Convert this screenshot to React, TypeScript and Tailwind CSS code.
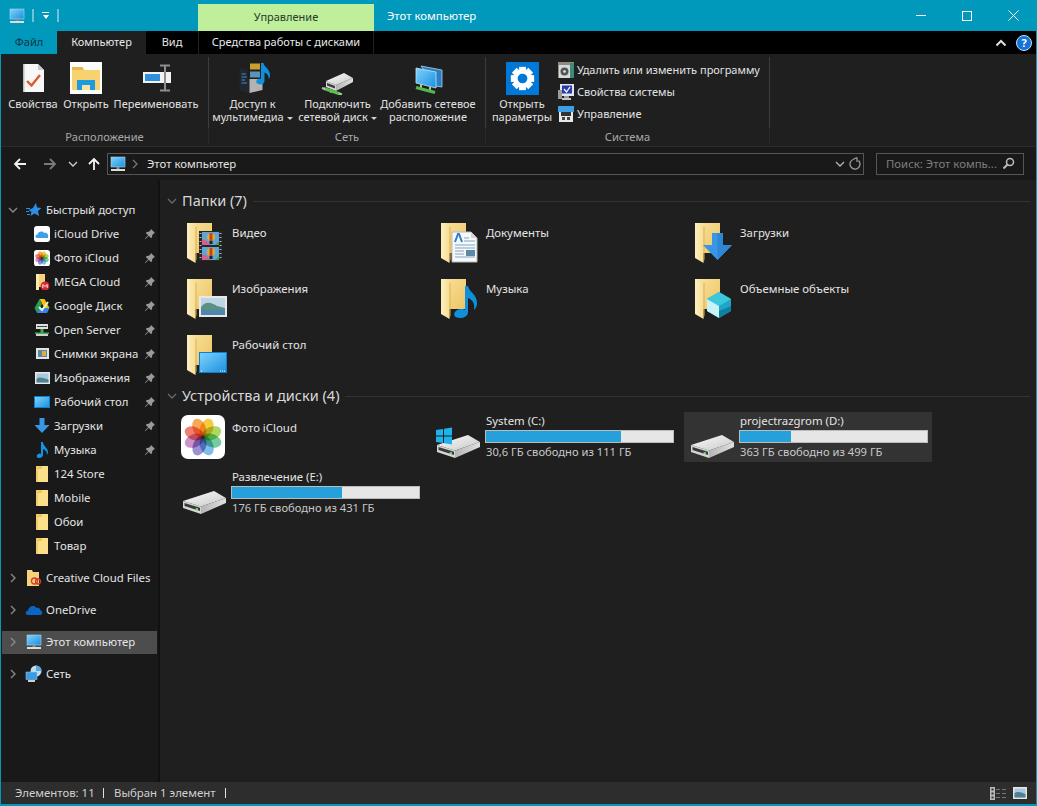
import React from "react";

const Grad = () => (
  <svg width="0" height="0" className="absolute">
    <defs>
      <linearGradient id="fb" x1="0" y1="0" x2="1" y2="1">
        <stop offset="0" stopColor="#f9e09a" />
        <stop offset="1" stopColor="#ecc565" />
      </linearGradient>
      <linearGradient id="ff" x1="0" y1="0" x2="1" y2="0">
        <stop offset="0" stopColor="#fdf0c0" />
        <stop offset="1" stopColor="#f8dd93" />
      </linearGradient>
      <linearGradient id="dt" x1="0" y1="0" x2="1" y2="1">
        <stop offset="0" stopColor="#fcfcfc" />
        <stop offset="1" stopColor="#c8c8c8" />
      </linearGradient>
      <linearGradient id="dr" x1="0" y1="0" x2="1" y2="0">
        <stop offset="0" stopColor="#b5b5b5" />
        <stop offset="1" stopColor="#e0e0e0" />
      </linearGradient>
      <linearGradient id="sc" x1="0" y1="0" x2="1" y2="1">
        <stop offset="0" stopColor="#7fd4fb" />
        <stop offset="1" stopColor="#1a8fe0" />
      </linearGradient>
    </defs>
  </svg>
);

const FolderBase = ({ children }: { children?: React.ReactNode }) => (
  <svg width="48" height="48" viewBox="0 0 48 48">
    <path d="M6 6H28V36H6Z" fill="url(#fb)" />
    <path d="M3 6H10C11 6 11.500 7 11.500 8V46L3 41Z" fill="url(#ff)" />
    <path d="M11.500 10L12.500 9.500V42L11.500 46Z" fill="#d9b357" />
    {children}
  </svg>
);

const FVideo = () => (
  <FolderBase>
    <rect x="15" y="14" width="23" height="30" fill="#262626" />
    <rect x="18" y="15" width="17" height="13" fill="#5ea5d8" />
    <rect x="18" y="30" width="17" height="13" fill="#5ea5d8" />
    <path d="M18 23C21 21 23 25 27 28H18Z" fill="#d65f8c" />
    <path d="M18 38C21 36 23 40 27 43H18Z" fill="#d65f8c" />
    <path d="M35 24L31 28H35Z" fill="#4b9b53" />
    <path d="M35 39L31 43H35Z" fill="#4b9b53" />
    <circle cx="27" cy="20" r="4" fill="#e0b020" />
    <rect x="25.500" y="16" width="3" height="8" fill="#c8402c" />
    <rect x="25.500" y="24" width="3" height="3" fill="#222" />
    <circle cx="27" cy="35" r="4" fill="#e0b020" />
    <rect x="25.500" y="31" width="3" height="8" fill="#c8402c" />
    <rect x="25.500" y="39" width="3" height="3" fill="#222" />
    <path d="M16.500 16v1M16.500 20v1M16.500 24v1M16.500 28v1M16.500 32v1M16.500 36v1M16.500 40v1M36.500 16v1M36.500 20v1M36.500 24v1M36.500 28v1M36.500 32v1M36.500 36v1M36.500 40v1" stroke="#b5b5b5" strokeWidth="2" />
  </FolderBase>
);
const FDocs = () => (
  <FolderBase>
    <path d="M14 15H33L39 21V45H14Z" fill="#f8f8f8" stroke="#b8b8b8" />
    <path d="M33 15V21H39Z" fill="#d5d5d5" />
    <path d="M17 25L20 17H21L24 25" fill="none" stroke="#2f7fd0" strokeWidth="2" />
    <path d="M26 21H31M26 24H37M17 28H37M17 31H37M17 34H26M17 37H26M17 40H37" stroke="#7aa7c9" />
    <rect x="28" y="33" width="9" height="6" fill="#5a8aa5" />
  </FolderBase>
);
const FDown = () => (
  <FolderBase>
    <path d="M20 16H31V28H40L25.500 43L11 28H20Z" fill="#3a96e4" />
    <path d="M25.500 16H31V28H40L25.500 43Z" fill="#2f86d6" />
  </FolderBase>
);
const FPics = () => (
  <FolderBase>
    <rect x="15" y="23" width="28" height="21" fill="#e8e8e8" />
    <rect x="17" y="25" width="24" height="17" fill="#bcd6e6" />
    <path d="M17 34C22 27 28 30 33 33L41 35V42H17Z" fill="#5d8f86" />
    <rect x="17" y="37" width="24" height="5" fill="#4f86ad" />
  </FolderBase>
);
const FMusic = () => (
  <FolderBase>
    <path d="M27 13H30C31 19 39 21 39 30C39 33 38 35 36 37C37 31 35 27 30 25V39C30 43 26 45 22 45C17 45 15 42 17 39C19 36 24 35 27 37Z" fill="#0f8fdc" />
  </FolderBase>
);
const F3d = () => (
  <FolderBase>
    <path d="M15 26L27 19L39 26V38L27 45L15 38Z" fill="#1ea6c6" />
    <path d="M15 26L27 19L39 26L27 33Z" fill="#3cc7dd" />
    <path d="M15 26L27 33V45L15 38Z" fill="#c9f2f5" />
    <path d="M27 38V45L39 38V33Z" fill="#0f7fa3" />
  </FolderBase>
);
const FDesk = () => (
  <FolderBase>
    <rect x="15.500" y="23.500" width="27" height="20" fill="url(#sc)" stroke="#0d7ed0" />
    <path d="M36 42h1M38 42h1M40 42h1M17 42h1" stroke="#fff" />
  </FolderBase>
);

const Photos = ({ s = 44 }: { s?: number }) => {
  const cols = ["#f6c21d", "#a5cf45", "#5ec391", "#6ab1e3", "#8a7fc9", "#c37fc2", "#ee6a5a", "#f59b3b"];
  return (
    <svg width={s} height={s} viewBox="0 0 44 44" className="isolate">
      <rect width="44" height="44" rx="7" fill="#fff" />
      {cols.map((c, i) => (
        <ellipse key={i} cx="22" cy="12.500" rx="6.500" ry="10" fill={c} opacity="0.85" className="mix-blend-multiply" transform={`rotate(${22 + i * 45} 22 22)`} />
      ))}
    </svg>
  );
};

const Drive = ({ win }: { win?: boolean }) => (
  <svg width="48" height="48" viewBox="0 0 48 48">
    <path d="M3 33L34 23L46 30L21 38.500Z" fill="url(#dt)" />
    <path d="M21 38.500L46 30V35L21 46Z" fill="url(#dr)" />
    <path d="M3 33L21 38.500V46L3 40Z" fill="#d6d6d6" />
    <path d="M4.500 35L20 39.800V43L4.500 38Z" fill="#3a3a3a" />
    <rect x="15.500" y="40.200" width="2.500" height="2" fill="#6de06d" />
    {win && (
      <g fill="#1fb3ec">
        <path d="M2 18L9 17V23.500H2Z" />
        <path d="M10 16.800L18 15.500V23.500H10Z" />
        <path d="M2 24.500H9V31L2 30Z" />
        <path d="M10 24.500H18V32.500L10 31.200Z" />
      </g>
    )}
  </svg>
);

const Monitor = ({ s = 16 }: { s?: number }) => (
  <svg width={s} height={s} viewBox="0 0 16 16">
    <rect x="1" y="1" width="14" height="10" fill="url(#sc)" stroke="#a7d5ee" strokeWidth="0.600" />
    <rect x="6.500" y="11" width="3" height="2" fill="#8b8b8b" />
    <rect x="1" y="13" width="14" height="2" fill="#dcdcdc" />
  </svg>
);

const SmallFolder = () => (
  <svg width="16" height="16" viewBox="0 0 16 16">
    <path d="M2 0H14V16H2Z" fill="#fbe08c" />
    <path d="M2 0H8V3H2Z" fill="#f0c657" />
    <path d="M2 0H4V16H2Z" fill="#f3cc68" />
  </svg>
);

const Pin = () => (
  <svg width="12" height="12" viewBox="0 0 12 12">
    <path d="M7 1L11 5L9.800 5.500L8.200 7.200L8 9.500L6.800 10L4.800 7.800L1.500 11L1 10.500L4.200 7.200L2 5.200L2.500 4L4.800 3.800L6.500 2.200Z" fill="#9a9a9a" />
  </svg>
);

const Chev = ({ dir = "r", c = "#8c8c8c" }: { dir?: "r" | "d"; c?: string }) => (
  <svg width="10" height="10" viewBox="0 0 10 10">
    <path d={dir === "r" ? "M3 1L7 5L3 9" : "M1 3L5 7L9 3"} fill="none" stroke={c} strokeWidth="1.300" />
  </svg>
);

const IcoCloud = () => (
  <svg width="16" height="16" viewBox="0 0 16 16">
    <rect width="16" height="16" rx="3" fill="#fff" />
    <path d="M3 12C1 12 1 8.500 3.500 8.500C4 5.500 8.500 4.500 10 7C13 6 15 9 14 12Z" fill="#3d9fe8" />
  </svg>
);
const IcoMega = () => (
  <svg width="16" height="16" viewBox="0 0 16 16">
    <path d="M2 0H11V13H2Z" fill="#f4d27c" />
    <path d="M2 0H5V16H2Z" fill="#fbe9ae" />
    <circle cx="11" cy="12" r="4.500" fill="#d9272e" />
    <path d="M8.800 14V10.500L11 12.500L13.200 10.500V14" fill="none" stroke="#fff" strokeWidth="0.900" />
  </svg>
);
const IcoGoogle = () => (
  <svg width="16" height="16" viewBox="0 0 16 16">
    <path d="M5.500 1H10.500L15.500 10H10.500Z" fill="#f4c20d" />
    <path d="M5.500 1L0.500 10L3 15L8 6Z" fill="#2a9e50" />
    <path d="M3 15H13L15.500 10H5.500Z" fill="#3b82ea" />
    <path d="M5 9L8 12L14 4" fill="none" stroke="#e8f5d0" strokeWidth="2" />
  </svg>
);
const IcoServer = () => (
  <svg width="16" height="16" viewBox="0 0 16 16">
    <rect x="2" y="2" width="12" height="5" fill="#dedede" />
    <rect x="3" y="4" width="10" height="1" fill="#444" />
    <rect x="6.500" y="7" width="3" height="4" fill="#3fae4a" />
    <rect x="1" y="10.500" width="14" height="1.500" fill="#46b050" />
    <rect x="2" y="12" width="12" height="2" fill="#cfcfcf" />
  </svg>
);
const IcoShots = () => (
  <svg width="16" height="16" viewBox="0 0 16 16">
    <rect x="2" y="2" width="13" height="11" fill="#e4e4e4" />
    <rect x="4" y="4" width="9" height="7" fill="#5d87a8" />
    <rect x="8" y="5" width="4" height="5" fill="#d9b23c" />
  </svg>
);
const IcoImg = () => (
  <svg width="16" height="16" viewBox="0 0 16 16">
    <rect x="1" y="2" width="15" height="12" fill="#e8e8e8" />
    <rect x="2.500" y="3.500" width="12" height="9" fill="#a9c8dc" />
    <path d="M2.500 9C6 6 9 8 14.500 9.500V12.500H2.500Z" fill="#4f8094" />
  </svg>
);
const IcoDesk = () => (
  <svg width="16" height="16" viewBox="0 0 16 16">
    <rect x="0.500" y="2.500" width="15" height="11" fill="url(#sc)" stroke="#0d7ed0" />
  </svg>
);
const IcoDown = () => (
  <svg width="16" height="16" viewBox="0 0 16 16">
    <path d="M5.500 0H10.500V7H15.500L8 15L0.500 7H5.500Z" fill="#3a96e4" />
  </svg>
);
const IcoMusic = () => (
  <svg width="16" height="16" viewBox="0 0 16 16">
    <path d="M7 0H9C9 4 14 6 14 10C14 11.500 13.500 12 13 13C13 9 11 8 9 7V13C9 15 7 16 5 16C3 16 2 14.500 3 13C4 11.500 6 11 7 12Z" fill="#1295e0" />
  </svg>
);
const IcoStar = () => (
  <svg width="16" height="16" viewBox="0 0 16 16">
    <path d="M10 1L11 5.500L15.500 6L12 9L13 14L8.500 11.500L4.500 14L5.500 10L2.500 8L7 6Z" fill="#2c8ee6" />
    <path d="M0 6.500H4M0 9.500H3M1 12.500H4" stroke="#2c8ee6" />
  </svg>
);
const IcoCC = () => (
  <svg width="16" height="16" viewBox="0 0 16 16">
    <path d="M1 0H6L7 2H13V16H1Z" fill="#f6d27a" />
    <circle cx="8.500" cy="11" r="3" fill="none" stroke="#d83a2a" strokeWidth="1.300" />
    <circle cx="12" cy="11.500" r="2.500" fill="none" stroke="#d83a2a" strokeWidth="1.300" />
  </svg>
);
const IcoOne = () => (
  <svg width="18" height="16" viewBox="0 0 18 16">
    <path d="M3 13C0 13 0 9 3 8.500C4 4 9 2.500 11.500 6C14 5 15.500 7 15.500 8.500C18 8.500 18 13 15.500 13Z" fill="#0a66c2" />
  </svg>
);
const IcoNet = () => (
  <svg width="18" height="18" viewBox="0 0 18 18">
    <circle cx="11" cy="6" r="5.500" fill="#bcdcf0" />
    <path d="M11 .5A5.500 5.500 0 0 1 16.500 6H11Z" fill="#5ba7dc" />
    <rect x="1" y="7" width="11" height="7.500" fill="#3c9be0" stroke="#9ed2f2" strokeWidth="0.500" />
    <rect x="3" y="15" width="7" height="2" fill="#cfcfcf" />
  </svg>
);

/* ribbon icons */
const RProps = () => (
  <svg width="32" height="32" viewBox="0 0 32 32">
    <path d="M6 2H21L27 8V30H6Z" fill="#f8f8f8" />
    <path d="M21 2V8H27Z" fill="#c8c8c8" />
    <path d="M6 2H7.500V30H6Z" fill="#bdbdbd" />
    <path d="M10 19L14.500 23.500L23 13" fill="none" stroke="#e2572b" strokeWidth="2.400" />
  </svg>
);
const ROpen = () => (
  <svg width="32" height="32" viewBox="0 0 32 32">
    <rect width="32" height="32" fill="#fff" />
    <path d="M2 6H13L15 8H30V28H2Z" fill="#f7d26f" />
    <rect x="2" y="5" width="11" height="3" fill="#e8b94a" />
    <path d="M7 28V18H25V28H20V23H12V28Z" fill="#1d9ae0" />
    <rect x="12" y="23" width="8" height="5" fill="#fbe39a" />
  </svg>
);
const RRename = () => (
  <svg width="32" height="32" viewBox="0 0 32 32">
    <rect x="3" y="10" width="28" height="11" fill="#f2f2f2" />
    <rect x="5" y="12" width="15" height="7" fill="#2f8fdd" />
    <rect x="24" y="3" width="2" height="26" fill="#8e8e8e" />
    <path d="M20 3.500H30M20 28.500H30" stroke="#8e8e8e" strokeWidth="2" />
  </svg>
);
const RMedia = () => (
  <svg width="36" height="32" viewBox="0 0 36 32">
    <path d="M4.500 6L14.500 8V31L4.500 28Z" fill="#23262c" />
    <path d="M14.500 8L27.500 6V28L14.500 31Z" fill="#b3b3b3" />
    <path d="M6.500 12H11M6.500 15H12M6.500 18H10M6.500 21H12" stroke="#3d8fd4" />
    <rect x="12.500" y="0" width="15" height="17" fill="#1c1e22" />
    <rect x="15" y="1.500" width="10" height="6" fill="#c9a02c" />
    <rect x="15" y="9.500" width="10" height="6" fill="#5c93b8" />
    <path d="M26 1H28.500C29 5 35 7 35 13C35 15 34.500 16 33.500 17C34 13 32 11.500 29.500 10.500V19C29.500 22 26 23 23 22C20.500 21 21 18 23 17C24 16.500 25 16.500 26 17Z" fill="#0f8fdc" />
  </svg>
);
const RMap = () => (
  <svg width="34" height="34" viewBox="0 0 34 34">
    <path d="M5 20L23 12L32 17L15 24Z" fill="url(#dt)" />
    <path d="M15 24L32 17V21L15 30Z" fill="url(#dr)" />
    <path d="M5 20L15 24V30L5 26Z" fill="#d6d6d6" />
    <path d="M6 22L14 25V27.500L6 24.500Z" fill="#3a3a3a" />
    <path d="M10 30V32" stroke="#999" strokeWidth="2" />
    <path d="M3 27.500L19 33" stroke="#5cc04c" strokeWidth="3" />
    <path d="M1 27L4 28M18 32.500L21 33.500" stroke="#bdbdbd" strokeWidth="2" />
  </svg>
);
const RNet = () => (
  <svg width="32" height="32" viewBox="0 0 32 32">
    <path d="M9 4L30 8V25L23 24Z" fill="#2b7fc4" stroke="#a6d5ef" strokeWidth="0.800" />
    <path d="M4 6L24 10V26L4 21Z" fill="url(#sc)" stroke="#c5e3f5" strokeWidth="0.800" />
    <path d="M9 22V26M18 25V28" stroke="#bbb" strokeWidth="2" />
    <path d="M4 25.500L23 30.500" stroke="#53b948" strokeWidth="3" />
  </svg>
);
const RGear = () => (
  <svg width="33" height="33" viewBox="0 0 34 34">
    <rect width="34" height="34" fill="#0078d7" />
    {[0, 45, 90, 135].map((r) => (
      <rect key={r} x="13.500" y="5" width="7" height="24" fill="#fff" transform={`rotate(${r} 17 17)`} />
    ))}
    <circle cx="17" cy="17" r="9.500" fill="#fff" />
    <circle cx="17" cy="17" r="5" fill="#0078d7" />
  </svg>
);
const SUninstall = () => (
  <svg width="16" height="16" viewBox="0 0 16 16">
    <rect x="0" y="0" width="16" height="16" fill="#8d8d7c" />
    <rect x="1" y="3" width="11" height="13" fill="#d9d9d9" />
    <circle cx="6.500" cy="9.500" r="4" fill="#555" />
    <circle cx="6.500" cy="9.500" r="1.300" fill="#eee" />
    <rect x="12" y="1" width="4" height="15" fill="#3b8b7a" />
  </svg>
);
const SSystem = () => (
  <svg width="16" height="16" viewBox="0 0 16 16">
    <rect x="2" y="0" width="14" height="12" fill="#dfe8f2" />
    <rect x="4" y="1.500" width="10" height="8" fill="#2c3ba8" />
    <path d="M6 5L8.500 8L12 3" fill="none" stroke="#fff" strokeWidth="1.300" />
    <rect x="6" y="12" width="5" height="2" fill="#999" />
    <rect x="0" y="6" width="4" height="9" fill="#9b9b9b" />
    <rect x="4" y="14" width="9" height="2" fill="#c6c6c6" />
  </svg>
);
const SManage = () => (
  <svg width="16" height="16" viewBox="0 0 16 16">
    <rect x="0" y="0" width="16" height="6" fill="#3d9fe8" />
    <rect x="1" y="6" width="14" height="10" fill="#e8e8e8" />
    <rect x="3" y="6" width="10" height="4" fill="#333" />
    <rect x="4" y="11" width="3" height="3" fill="#444" />
    <rect x="9" y="11" width="3" height="3" fill="#444" />
  </svg>
);

const Arrow = ({ c, flip }: { c: string; flip?: boolean }) => (
  <svg width="14" height="14" viewBox="0 0 14 14" className={flip ? "rotate-180" : ""}>
    <path d="M13 7H2M7 2L2 7L7 12" fill="none" stroke={c} strokeWidth="1.800" />
  </svg>
);

const RBtn = ({ w, icon, lines }: { w: string; icon: React.ReactNode; lines: React.ReactNode[] }) => (
  <div className={`${w} flex shrink-0 flex-col items-center`}>
    <div className="flex h-[36px] items-center justify-center">{icon}</div>
    <div className="mt-[1px] text-center text-[11px] leading-[13px] whitespace-nowrap text-[#e2e2e2]">
      {lines.map((l, i) => (
        <div key={i}>{l}</div>
      ))}
    </div>
  </div>
);

const Caret = () => <span className="ml-[3px] inline-block h-0 w-0 border-x-[3px] border-t-[3px] border-x-transparent border-t-[#d0d0d0] align-middle" />;

const RGroup = ({ w, label, children, extra }: { w: string; label: string; children: React.ReactNode; extra?: string }) => (
  <div className={`${w} flex shrink-0 flex-col`}>
    <div className={`mt-[3px] flex h-[71px] border-r border-[#3c3c3c] pt-[3px] ${extra ?? ""}`}>{children}</div>
    <div className="flex h-[16px] items-center justify-center border-r border-[#2a2a2a] pt-[3px] text-[11.100px] text-[#a8a8a8]">{label}</div>
  </div>
);

const quick: [React.ReactNode, string, boolean][] = [
  [<IcoCloud />, "iCloud Drive", true],
  [<Photos s={16} />, "Фото iCloud", true],
  [<IcoMega />, "MEGA Cloud", true],
  [<IcoGoogle />, "Google Диск", true],
  [<IcoServer />, "Open Server", true],
  [<IcoShots />, "Снимки экрана", true],
  [<IcoImg />, "Изображения", true],
  [<IcoDesk />, "Рабочий стол", true],
  [<IcoDown />, "Загрузки", true],
  [<IcoMusic />, "Музыка", true],
  [<SmallFolder />, "124 Store", false],
  [<SmallFolder />, "Mobile", false],
  [<SmallFolder />, "Обои", false],
  [<SmallFolder />, "Товар", false],
];

const TopRow = ({ icon, label, open, sel, mt }: { icon: React.ReactNode; label: string; open?: boolean; sel?: boolean; mt?: boolean }) => (
  <div className={`flex h-[24px] items-center px-[1px] ${mt ? "mt-[8px]" : ""}`}>
    <div className={`flex h-[23px] w-full items-center ${sel ? "bg-[#4d4d4d]" : ""}`}>
      <div className="flex w-[21px] shrink-0 justify-center">
        <Chev dir={open ? "d" : "r"} />
      </div>
      <div className="flex w-[22px] shrink-0 justify-center">{icon}</div>
      <span className="ml-[1px] text-[11.4px] whitespace-nowrap text-[#e4e4e4]">{label}</span>
    </div>
  </div>
);

const folders: [React.ReactNode, string][] = [
  [<FVideo />, "Видео"],
  [<FDocs />, "Документы"],
  [<FDown />, "Загрузки"],
  [<FPics />, "Изображения"],
  [<FMusic />, "Музыка"],
  [<F3d />, "Объемные объекты"],
  [<FDesk />, "Рабочий стол"],
];

const SecHead = ({ title, mb }: { title: string; mb: string }) => (
  <div className={`${mb} flex h-[20px] items-center pr-[6px] pl-[7px]`}>
    <Chev dir="d" c="#6a6a6a" />
    <span className="ml-[5px] text-[14.500px] whitespace-nowrap text-[#d8d8d8]">{title}</span>
    <div className="ml-[6px] h-px flex-1 bg-[#333]" />
  </div>
);

const DriveTile = ({ name, free, pct, win, sel }: { name: string; free: string; pct: number; win?: boolean; sel?: boolean }) => (
  <div className={`flex h-[50px] w-[248px] ${sel ? "bg-[#333333]" : ""}`}>
    <div className="w-[55px] shrink-0 pl-[4px]">
      <Drive win={win} />
    </div>
    <div className="flex w-[189px] flex-col pt-[1px]">
      <div className="h-[16px] pl-[1px] text-[11.4px] leading-[16px] whitespace-nowrap text-[#e4e4e4]">{name}</div>
      <div className="mt-[1px] h-[13px] border border-[#bcbcbc] bg-[#e6e6e6]">
        <div className="h-full bg-[#26a0da]" style={{ width: `${pct}%` }} />
      </div>
      <div className="mt-[1px] h-[16px] pl-[1px] text-[11.200px] leading-[16px] whitespace-nowrap text-[#c8c8c8]">{free}</div>
    </div>
  </div>
);

export default function App() {
  return (
    <div className="flex h-[806px] w-[1037px] flex-col overflow-hidden bg-[#0099bc] px-[1px] pb-[2px] font-['Noto_Sans',sans-serif]">
      <Grad />
      {/* title bar */}
      <div className="flex h-[31px] shrink-0 items-start">
        <div className="flex h-[31px] w-[197px] items-center pl-[8px]">
          <Monitor />
          <div className="ml-[7px] h-[13px] w-[2px] bg-[#6fc3d8]" />
          <div className="ml-[8px] flex flex-col items-center gap-[2px]">
            <div className="h-px w-[7px] bg-white" />
            <div className="h-0 w-0 border-x-[3.500px] border-t-[4px] border-x-transparent border-t-white" />
          </div>
          <div className="ml-[8px] h-[13px] w-[2px] bg-[#6fc3d8]" />
        </div>
        <div className="mt-[4px] flex h-[27px] w-[176px] items-center justify-center bg-[#c0ef9b] text-[11px] text-[#2a3a2a]">Управление</div>
        <div className="flex h-[31px] items-center pl-[13px] text-[11.4px] text-white">Этот компьютер</div>
        <div className="ml-auto flex h-[31px] items-center">
          <div className="flex w-[46px] justify-center">
            <div className="h-px w-[10px] bg-white" />
          </div>
          <div className="flex w-[46px] justify-center">
            <div className="h-[10px] w-[10px] border border-white" />
          </div>
          <div className="flex w-[46px] justify-center">
            <svg width="11" height="11" viewBox="0 0 11 11">
              <path d="M.5 .5L10.500 10.500M10.500 .5L.5 10.500" stroke="#fff" />
            </svg>
          </div>
        </div>
      </div>
      {/* tabs */}
      <div className="flex h-[23px] shrink-0 items-stretch bg-black text-[11px] text-[#e8e8e8]">
        <div className="flex w-[56px] items-center justify-center bg-[#0099bc] text-[#0d3340]">Файл</div>
        <div className="flex w-[89px] items-center justify-center bg-[#1f1f1f]">Компьютер</div>
        <div className="flex w-[52px] items-center justify-center">Вид</div>
        <div className="flex w-[176px] items-center justify-center border-x border-[#222]">Средства работы с дисками</div>
        <div className="ml-auto flex items-center pr-[4px]">
          <svg width="12" height="10" viewBox="0 0 12 10" className="mr-[9px]">
            <path d="M1.500 7.500L6 3L10.500 7.500" fill="none" stroke="#e0e0e0" strokeWidth="2" />
          </svg>
          <div className="flex h-[16px] w-[16px] items-center justify-center rounded-full border border-[#bfe3fa] bg-[#1572d8] text-[11px] leading-none font-bold text-white">?</div>
        </div>
      </div>
      {/* ribbon */}
      <div className="flex h-[92px] shrink-0 bg-[#1f1f1f]">
        <RGroup w="w-[208px]" label="Расположение" extra="pl-[4px]">
          <RBtn w="w-[56px]" icon={<RProps />} lines={["Свойства"]} />
          <RBtn w="w-[50px]" icon={<ROpen />} lines={["Открыть"]} />
          <RBtn w="w-[90px]" icon={<RRename />} lines={["Переименовать"]} />
        </RGroup>
        <RGroup w="w-[277px]" label="Сеть">
          <RBtn w="w-[87px]" icon={<RMedia />} lines={["Доступ к", <>мультимедиа<Caret /></>]} />
          <RBtn w="w-[83px]" icon={<RMap />} lines={["Подключить", <>сетевой диск<Caret /></>]} />
          <RBtn w="w-[98px]" icon={<RNet />} lines={["Добавить сетевое", "расположение"]} />
        </RGroup>
        <RGroup w="w-[284px]" label="Система">
          <RBtn w="w-[72px]" icon={<RGear />} lines={["Открыть", "параметры"]} />
          <div className="flex flex-col gap-[6px] pt-[2px] text-[11px] whitespace-nowrap text-[#e2e2e2]">
            <div className="flex h-[16px] items-center gap-[3px]"><SUninstall />Удалить или изменить программу</div>
            <div className="flex h-[16px] items-center gap-[3px]"><SSystem />Свойства системы</div>
            <div className="flex h-[16px] items-center gap-[3px]"><SManage />Управление</div>
          </div>
        </RGroup>
      </div>
      {/* address */}
      <div className="flex h-[34px] shrink-0 items-center border-t border-[#2b2b2b] bg-[#191919] pl-[4px]">
        <div className="flex w-[30px] justify-center"><Arrow c="#f0f0f0" /></div>
        <div className="flex w-[30px] justify-center"><Arrow c="#7a7a7a" flip /></div>
        <div className="flex w-[16px] justify-center"><Chev dir="d" c="#d0d0d0" /></div>
        <div className="flex w-[26px] justify-center">
          <svg width="14" height="14" viewBox="0 0 14 14">
            <path d="M7 13V2M2 7L7 2L12 7" fill="none" stroke="#f5f5f5" strokeWidth="1.800" />
          </svg>
        </div>
        <div className="flex h-[22px] w-[757px] items-center border border-[#555] pl-[2px]">
          <Monitor />
          <div className="ml-[1px] flex w-[16px] justify-center"><Chev c="#777" /></div>
          <span className="ml-[4px] text-[11.4px] text-[#e2e2e2]">Этот компьютер</span>
          <div className="ml-auto flex items-center pr-[1px]">
            <Chev dir="d" c="#b5b5b5" />
            <svg width="14" height="14" viewBox="0 0 14 14" className="ml-[3px]">
              <path d="M10.500 3.500A5 5 0 1 1 5 2.500M5 2.500L9 .5M9 .5V5" fill="none" stroke="#9a9a9a" strokeWidth="1.300" />
            </svg>
          </div>
        </div>
        <div className="ml-[12px] flex h-[22px] w-[148px] items-center border border-[#555] pl-[9px] text-[11.4px] whitespace-nowrap text-[#7e7e7e]">
          Поиск: Этот компь...
          <svg width="13" height="13" viewBox="0 0 13 13" className="mr-[8px] ml-auto">
            <circle cx="8" cy="5" r="3.500" fill="none" stroke="#bdbdbd" strokeWidth="1.500" />
            <path d="M5.500 7.500L1.500 11.500" stroke="#bdbdbd" strokeWidth="2" />
          </svg>
        </div>
      </div>
      {/* body */}
      <div className="flex min-h-0 flex-1">
        <div className="flex w-[157px] shrink-0 flex-col bg-[#191919] pt-[18px]">
          <TopRow icon={<IcoStar />} label="Быстрый доступ" open />
          {quick.map(([ic, label, pin]) => (
            <div key={label} className="flex h-[24px] items-center">
              <div className="flex w-[49px] shrink-0 justify-end">{ic}</div>
              <span className="ml-[4px] flex-1 text-[11.4px] whitespace-nowrap text-[#e4e4e4]">{label}</span>
              {pin && <div className="mr-[2px] w-[12px]"><Pin /></div>}
            </div>
          ))}
          <TopRow icon={<IcoCC />} label="Creative Cloud Files" mt />
          <TopRow icon={<IcoOne />} label="OneDrive" mt />
          <TopRow icon={<Monitor />} label="Этот компьютер" mt sel />
          <TopRow icon={<IcoNet />} label="Сеть" mt />
        </div>
        <div className="w-[2px] shrink-0 bg-[#111]" />
        <div className="flex-1 bg-[#1f1f1f] pt-[11px]">
          <SecHead title="Папки (7)" mb="mb-[5px]" />
          <div className="mb-[8px] ml-[16px] grid grid-cols-[repeat(3,254px)] gap-y-[6px]">
            {folders.map(([ic, label]) => (
              <div key={label} className="flex h-[50px] w-[248px]">
                <div className="w-[56px] shrink-0 pt-[1px] pl-[8px]">{ic}</div>
                <div className="pt-[9px] text-[11.4px] leading-[16px] whitespace-nowrap text-[#e4e4e4]">{label}</div>
              </div>
            ))}
          </div>
          <SecHead title="Устройства и диски (4)" mb="mb-[6px]" />
          <div className="ml-[16px] grid grid-cols-[repeat(3,254px)] gap-y-[6px]">
            <div className="flex h-[50px] w-[248px]">
              <div className="w-[56px] shrink-0 pt-[3px] pl-[5px]"><Photos /></div>
              <div className="pt-[8px] text-[11.4px] leading-[16px] whitespace-nowrap text-[#e4e4e4]">Фото iCloud</div>
            </div>
            <DriveTile name="System (C:)" free="30,6 ГБ свободно из 111 ГБ" pct={72} win />
            <DriveTile name="projectrazgrom (D:)" free="363 ГБ свободно из 499 ГБ" pct={27.500} sel />
            <DriveTile name="Развлечение (E:)" free="176 ГБ свободно из 431 ГБ" pct={59} />
          </div>
        </div>
      </div>
      {/* status */}
      <div className="flex h-[22px] shrink-0 items-center bg-[#2d2d2d] pl-[14px] text-[11.4px] text-[#d0d0d0]">
        <span className="w-[88px] whitespace-nowrap">Элементов: 11</span>
        <div className="h-[10px] w-px bg-[#e0e0e0]" />
        <span className="ml-[10px] w-[111px] whitespace-nowrap">Выбран 1 элемент</span>
        <div className="h-[10px] w-px bg-[#e0e0e0]" />
        <div className="ml-auto flex items-center gap-[7px] pr-[9px]">
          <svg width="16" height="13" viewBox="0 0 16 13">
            <rect x="0" y="0" width="5" height="13" fill="#b9b9b9" />
            <rect x="1.500" y="1.500" width="2" height="2" fill="#333" />
            <rect x="1.500" y="5.500" width="2" height="2" fill="#333" />
            <rect x="1.500" y="9.500" width="2" height="2" fill="#5a2a2a" />
            <path d="M6 2.500H10M12 2.500H16M6 6.500H10M12 6.500H16M6 10.500H10M12 10.500H16" stroke="#777" />
          </svg>
          <svg width="14" height="12" viewBox="0 0 14 12">
            <rect width="14" height="12" fill="#e6e6e6" />
            <rect x="1.500" y="1.500" width="11" height="9" fill="#a9c8dc" />
            <path d="M1.500 6C5 4 8 5 12.500 7V10.500H1.500Z" fill="#4f8094" />
          </svg>
        </div>
      </div>
    </div>
  );
}
